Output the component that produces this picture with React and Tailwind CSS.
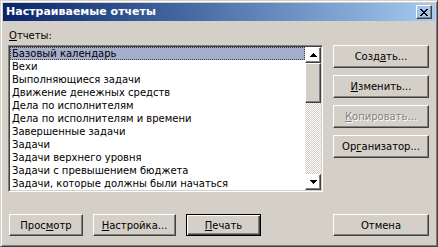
const ITEMS = [
  'Базовый календарь',
  'Вехи',
  'Выполняющиеся задачи',
  'Движение денежных средств',
  'Дела по исполнителям',
  'Дела по исполнителям и времени',
  'Завершенные задачи',
  'Задачи',
  'Задачи верхнего уровня',
  'Задачи с превышением бюджета',
  'Задачи, которые должны были начаться',
]

// Classic raised 3D edge: white/dark outer, light/gray inner
const RAISED =
  'border border-t-white border-l-white border-r-[#404040] border-b-[#404040] shadow-[inset_-1px_-1px_#808080]'

function Btn({ label, mn, className = '', disabled, isDefault }) {
  // label split around the mnemonic letter index
  const text =
    mn == null ? (
      label
    ) : (
      <>
        {label.slice(0, mn)}
        <u className="underline-offset-[1px]">{label[mn]}</u>
        {label.slice(mn + 1)}
      </>
    )
  if (isDefault) {
    return (
      <div className={`border border-black ${className}`}>
        <div className="flex h-full items-center justify-center shadow-[inset_1px_1px_#fff,inset_-1px_-1px_#404040,inset_-2px_-2px_#808080]">
          {text}
        </div>
      </div>
    )
  }
  return (
    <div
      className={`flex items-center justify-center ${RAISED} ${className} ${
        disabled ? 'text-[#808080] [text-shadow:1px_1px_#fff]' : ''
      }`}
    >
      {text}
    </div>
  )
}

function Arrow({ up }) {
  return (
    <svg width="7" height="4" viewBox="0 0 7 4" shapeRendering="crispEdges">
      <path d={up ? 'M3.5 0L7 4H0z' : 'M0 0H7L3.5 4z'} fill="#000" />
    </svg>
  )
}

function CloseGlyph() {
  const px = [
    [0, 0], [1, 0], [6, 0], [7, 0],
    [1, 1], [2, 1], [5, 1], [6, 1],
    [2, 2], [3, 2], [4, 2], [5, 2],
    [3, 3], [4, 3],
    [2, 4], [3, 4], [4, 4], [5, 4],
    [1, 5], [2, 5], [5, 5], [6, 5],
    [0, 6], [1, 6], [6, 6], [7, 6],
  ]
  return (
    <svg width="8" height="7" viewBox="0 0 8 7" shapeRendering="crispEdges">
      {px.map(([x, y]) => (
        <rect key={`${x}-${y}`} x={x} y={y} width="1" height="1" fill="#000" />
      ))}
    </svg>
  )
}

export default function App() {
  return (
    <div className="h-[247px] w-[438px] bg-[#d4d0c8] text-[10px] text-black [font-family:'DejaVu_Sans',sans-serif]">
      <div className="flex h-full flex-col border border-[#d4d0c8] border-r-[#404040] border-b-[#404040] p-[2px] shadow-[inset_1px_1px_#fff,inset_-1px_-1px_#808080]">
        {/* Title bar */}
        <div className="flex h-[18px] shrink-0 items-center justify-between bg-linear-to-r from-[#0a246a] to-[#a6caf0] pl-[3px] pr-[3px]">
          <span className="text-[11px] font-bold text-white">Настраиваемые отчеты</span>
          <div className={`flex h-[14px] w-[16px] items-center justify-center ${RAISED}`}>
            <CloseGlyph />
          </div>
        </div>

        {/* Body */}
        <div className="flex flex-1 flex-col pl-[5px] pt-[8px]">
          <div className="h-[13px] pl-[1px] leading-[13px]">
            <u className="underline-offset-[1px]">О</u>тчеты:
          </div>

          <div className="mt-[3px] flex">
            {/* List box */}
            <div className="flex h-[147px] w-[315px] border border-[#808080] border-r-white border-b-white bg-white shadow-[inset_1px_1px_#404040,inset_-1px_-1px_#d4d0c8] p-[1px]">
              <div className="flex-1 overflow-hidden">
                {ITEMS.map((it, i) => (
                  <div
                    key={it}
                    className={`h-[13px] whitespace-nowrap pl-[2px] leading-[13px] ${
                      i === 0
                        ? 'bg-[#a5aecb] outline-1 outline-dotted outline-[#404040] -outline-offset-1'
                        : ''
                    }`}
                  >
                    {it}
                  </div>
                ))}
              </div>
              {/* Scrollbar */}
              <div className="flex w-[16px] flex-col">
                <div className={`flex h-[16px] items-center justify-center ${RAISED}`}>
                  <Arrow up />
                </div>
                <div className="flex flex-1 flex-col bg-[repeating-conic-gradient(#d4d0c8_0_25%,#fff_0_50%)] bg-[length:2px_2px]">
                  <div className={`h-[40px] bg-[#d4d0c8] ${RAISED}`} />
                </div>
                <div className={`flex h-[16px] items-center justify-center ${RAISED}`}>
                  <Arrow />
                </div>
              </div>
            </div>

            {/* Right buttons */}
            <div className="ml-[10px] flex w-[96px] flex-col gap-[7px]">
              <Btn label="Создать..." mn={4} className="h-[23px]" />
              <Btn label="Изменить..." mn={0} className="h-[23px]" />
              <Btn label="Копировать..." mn={0} disabled className="h-[23px]" />
              <Btn label="Организатор..." mn={2} className="h-[23px]" />
            </div>
          </div>

          {/* Bottom buttons */}
          <div className="mt-[22px] flex">
            <Btn label="Просмотр" mn={4} className="ml-[1px] h-[22px] w-[74px]" />
            <Btn label="Настройка..." mn={0} className="ml-[10px] h-[22px] w-[83px]" />
            <Btn label="Печать" mn={0} isDefault className="ml-[10px] h-[22px] w-[75px]" />
            <Btn label="Отмена" className="ml-[72px] h-[22px] w-[96px]" />
          </div>
        </div>
      </div>
    </div>
  )
}
